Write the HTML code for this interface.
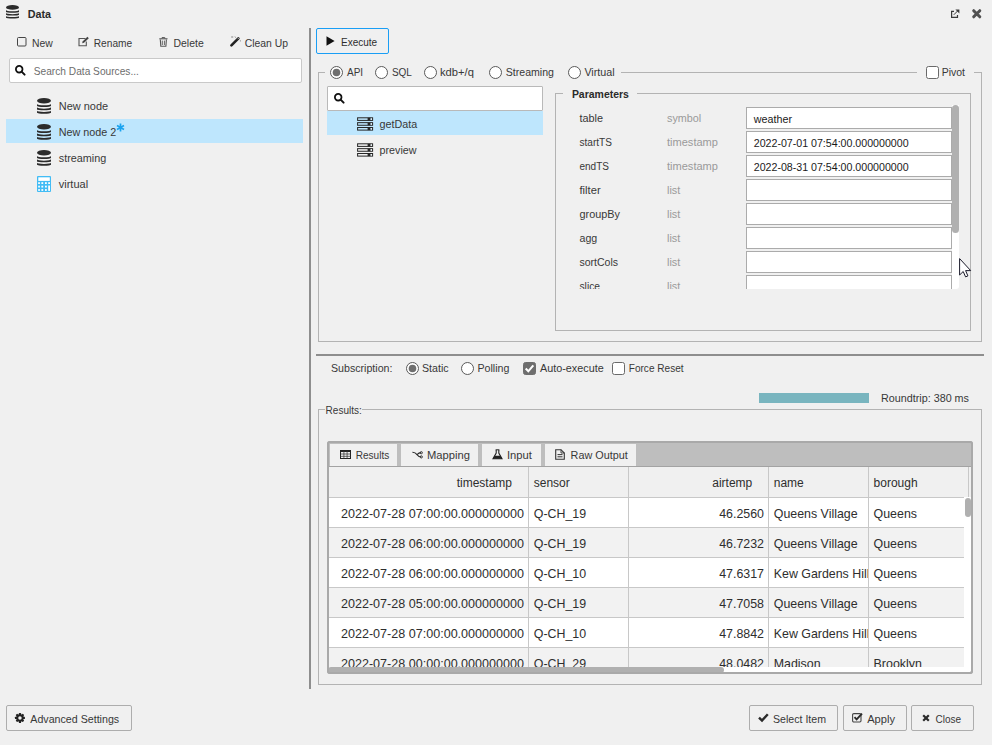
<!DOCTYPE html>
<html><head><meta charset="utf-8"><title>Data</title>
<style>
html,body{margin:0;padding:0;}
body{width:992px;height:745px;position:relative;overflow:hidden;background:#f0f0f0;font-family:"Liberation Sans",sans-serif;}
.t{position:absolute;white-space:nowrap;}
.r{position:absolute;box-sizing:border-box;}
svg{position:absolute;overflow:visible;}
</style></head><body>
<svg style="left:6px;top:5.1px" width="13" height="13.6" viewBox="0 0 14 16" preserveAspectRatio="none"><ellipse cx="7" cy="2.8" rx="7" ry="2.8" fill="#2b2b2b"/><path d="M0 6.0 V8.2 A7 0.9 0 0 0 14 8.2 V6.0 A7 1.4 0 0 1 0 6.0Z" fill="#2b2b2b"/><path d="M0 9.4 V11.6 A7 0.9 0 0 0 14 11.6 V9.4 A7 1.4 0 0 1 0 9.4Z" fill="#2b2b2b"/><path d="M0 12.8 V15.0 A7 0.9 0 0 0 14 15.0 V12.8 A7 1.4 0 0 1 0 12.8Z" fill="#2b2b2b"/></svg>
<div class="t" style="top:9.01px;font-size:10.76px;line-height:10.76px;color:#2a2a2a;font-weight:bold;left:27.80px;">Data</div>
<svg style="left:951px;top:8.5px" width="9" height="9" viewBox="0 0 9 9"><path d="M3 2.4 H0.6 V8.3 H6.5 V5.9" fill="none" stroke="#3a3a3a" stroke-width="1.2"/><path d="M2.8 5.8 L6.9 1.7" stroke="#3a3a3a" stroke-width="1"/><path d="M4.4 0.5 L8.4 0.5 L8.4 4.5Z" fill="#3a3a3a"/></svg>
<svg style="left:972px;top:9px" width="10" height="10" viewBox="0 0 10 10"><path d="M1.7 1.7 L7.8 7.8 M7.8 1.7 L1.7 7.8" stroke="#505050" stroke-width="3" stroke-linecap="round"/></svg>
<svg style="left:17px;top:37px" width="10" height="10" viewBox="0 0 10 10"><rect x="0.5" y="0.5" width="8.5" height="8.5" rx="1" fill="none" stroke="#444" stroke-width="1"/></svg>
<div class="t" style="top:39.01px;font-size:10.38px;line-height:10.38px;color:#383838;left:32.00px;">New</div>
<svg style="left:78px;top:36px" width="12" height="11" viewBox="0 0 12 11"><path d="M7.5 2.5 H1 V9.8 H8.3 V5.5" fill="none" stroke="#555" stroke-width="1.1"/><path d="M4.2 7.2 L4.6 5.4 L9.4 0.8 L10.8 2.2 L6 6.8Z" fill="#444"/></svg>
<div class="t" style="top:39.00px;font-size:10.19px;line-height:10.19px;color:#383838;left:93.75px;">Rename</div>
<svg style="left:159px;top:37px" width="9" height="10" viewBox="0 0 9 10"><path d="M0.3 1.8 H8.5" stroke="#555" stroke-width="1.1"/><path d="M3 1.5 V0.6 H5.8 V1.5" fill="none" stroke="#555" stroke-width="1"/><path d="M1.3 2.5 L1.8 9.3 H6.9 L7.4 2.5" fill="none" stroke="#555" stroke-width="1.1"/><path d="M3.3 3.6 V8 M5.4 3.6 V8" stroke="#555" stroke-width="0.9"/></svg>
<div class="t" style="top:39.00px;font-size:10.46px;line-height:10.46px;color:#383838;left:173.50px;">Delete</div>
<svg style="left:230px;top:36px" width="11" height="11" viewBox="0 0 11 11"><path d="M1.4 9.4 L8.4 2.4" stroke="#222" stroke-width="2.6" stroke-linecap="round"/><path d="M7.6 3.2 L9.2 1.6" stroke="#f0f0f0" stroke-width="0.7"/><path d="M1.2 1 H3.2 M5 0.6 L5.6 1.6 M10.4 4.4 V5.4" stroke="#666" stroke-width="0.8"/></svg>
<div class="t" style="top:39.01px;font-size:10.40px;line-height:10.40px;color:#383838;left:244.75px;">Clean Up</div>
<div class="r" style="left:9px;top:58px;width:293px;height:25px;background:#fff;border:1px solid #c9c9c9;border-radius:2px;"></div>
<svg style="left:15px;top:65px" width="11" height="11" viewBox="0 0 11 11"><circle cx="4.2" cy="4.2" r="3.3" fill="none" stroke="#111" stroke-width="1.8"/><path d="M6.6 6.6 L9.6 9.6" stroke="#111" stroke-width="2" stroke-linecap="round"/></svg>
<div class="t" style="top:67.01px;font-size:10.18px;line-height:10.18px;color:#6d6d6d;left:33.75px;">Search Data Sources...</div>
<div class="r" style="left:6px;top:119px;width:297px;height:24px;background:#bee6fd;"></div>
<svg style="left:37px;top:98.1px" width="14" height="15.8" viewBox="0 0 14 16" preserveAspectRatio="none"><ellipse cx="7" cy="2.8" rx="7" ry="2.8" fill="#2b2b2b"/><path d="M0 6.0 V8.2 A7 0.9 0 0 0 14 8.2 V6.0 A7 1.4 0 0 1 0 6.0Z" fill="#2b2b2b"/><path d="M0 9.4 V11.6 A7 0.9 0 0 0 14 11.6 V9.4 A7 1.4 0 0 1 0 9.4Z" fill="#2b2b2b"/><path d="M0 12.8 V15.0 A7 0.9 0 0 0 14 15.0 V12.8 A7 1.4 0 0 1 0 12.8Z" fill="#2b2b2b"/></svg>
<div class="t" style="top:101.00px;font-size:10.96px;line-height:10.96px;color:#383838;left:58.75px;">New node</div>
<svg style="left:37px;top:124.1px" width="14" height="15.8" viewBox="0 0 14 16" preserveAspectRatio="none"><ellipse cx="7" cy="2.8" rx="7" ry="2.8" fill="#2b2b2b"/><path d="M0 6.0 V8.2 A7 0.9 0 0 0 14 8.2 V6.0 A7 1.4 0 0 1 0 6.0Z" fill="#2b2b2b"/><path d="M0 9.4 V11.6 A7 0.9 0 0 0 14 11.6 V9.4 A7 1.4 0 0 1 0 9.4Z" fill="#2b2b2b"/><path d="M0 12.8 V15.0 A7 0.9 0 0 0 14 15.0 V12.8 A7 1.4 0 0 1 0 12.8Z" fill="#2b2b2b"/></svg>
<div class="t" style="top:127.00px;font-size:10.77px;line-height:10.77px;color:#383838;left:58.75px;">New node 2</div>
<svg style="left:37px;top:150.1px" width="14" height="15.8" viewBox="0 0 14 16" preserveAspectRatio="none"><ellipse cx="7" cy="2.8" rx="7" ry="2.8" fill="#2b2b2b"/><path d="M0 6.0 V8.2 A7 0.9 0 0 0 14 8.2 V6.0 A7 1.4 0 0 1 0 6.0Z" fill="#2b2b2b"/><path d="M0 9.4 V11.6 A7 0.9 0 0 0 14 11.6 V9.4 A7 1.4 0 0 1 0 9.4Z" fill="#2b2b2b"/><path d="M0 12.8 V15.0 A7 0.9 0 0 0 14 15.0 V12.8 A7 1.4 0 0 1 0 12.8Z" fill="#2b2b2b"/></svg>
<div class="t" style="top:153.01px;font-size:10.82px;line-height:10.82px;color:#383838;left:58.75px;">streaming</div>
<svg style="left:37px;top:176px" width="14" height="16" viewBox="0 0 14 16"><rect x="0" y="0" width="14" height="16" rx="1" fill="#42bcf5"/><rect x="1.3" y="1.3" width="11.5" height="3.6" fill="#fff"/><rect x="1.2" y="6.2" width="1.7" height="1.8" fill="#fff"/><rect x="4.4" y="6.2" width="1.8" height="1.8" fill="#fff"/><rect x="8.0" y="6.2" width="1.8" height="1.8" fill="#fff"/><rect x="11.2" y="6.2" width="1.8" height="1.8" fill="#fff"/><rect x="1.2" y="9.7" width="1.7" height="1.8" fill="#fff"/><rect x="4.4" y="9.7" width="1.8" height="1.8" fill="#fff"/><rect x="8.0" y="9.7" width="1.8" height="1.8" fill="#fff"/><rect x="1.2" y="13.1" width="1.7" height="1.8" fill="#fff"/><rect x="4.4" y="13.1" width="1.8" height="1.8" fill="#fff"/><rect x="8.0" y="13.1" width="1.8" height="1.8" fill="#fff"/><rect x="11.2" y="9.5" width="1.8" height="5.4" fill="#fff"/></svg>
<div class="t" style="top:179.00px;font-size:11.00px;line-height:11.00px;color:#383838;left:58.75px;">virtual</div>
<svg style="left:116.2px;top:123px" width="9" height="9" viewBox="0 0 9 9"><path d="M4.5 0.5 V8.5 M1 2.5 L8 6.5 M8 2.5 L1 6.5" stroke="#1aa3f0" stroke-width="1.7"/></svg>
<div class="r" style="left:309px;top:28px;width:2px;height:661px;background:#8e8e8e;"></div>
<div class="r" style="left:316px;top:28px;width:73px;height:26px;border:1px solid #1a9ef5;background:#f0f0f0;border-radius:2px;"></div>
<svg style="left:326px;top:36px" width="9" height="10" viewBox="0 0 9 10"><path d="M0.5 0.3 L8.6 5 L0.5 9.7Z" fill="#111"/></svg>
<div class="t" style="top:38.00px;font-size:10.00px;line-height:10.00px;color:#2e2e2e;left:341.00px;">Execute</div>
<div class="r" style="left:318px;top:72px;width:1px;height:270px;background:#b3b3b3;"></div>
<div class="r" style="left:318px;top:341px;width:664px;height:1px;background:#b3b3b3;"></div>
<div class="r" style="left:981px;top:72px;width:1px;height:270px;background:#b3b3b3;"></div>
<div class="r" style="left:318px;top:72px;width:7px;height:1px;background:#b3b3b3;"></div>
<div class="r" style="left:621px;top:72px;width:296px;height:1px;background:#b3b3b3;"></div>
<div class="r" style="left:974px;top:72px;width:8px;height:1px;background:#b3b3b3;"></div>
<svg style="left:330px;top:66px" width="13" height="13" viewBox="0 0 13 13"><circle cx="6.5" cy="6.5" r="6" fill="#fff" stroke="#5a5a5a" stroke-width="1"/><circle cx="6.5" cy="6.5" r="3.8" fill="#6e6e6e"/></svg>
<div class="t" style="top:68.00px;font-size:10.00px;line-height:10.00px;color:#383838;left:347.00px;">API</div>
<svg style="left:375px;top:66px" width="13" height="13" viewBox="0 0 13 13"><circle cx="6.5" cy="6.5" r="6" fill="#fff" stroke="#5a5a5a" stroke-width="1"/></svg>
<div class="t" style="top:68.00px;font-size:10.00px;line-height:10.00px;color:#383838;left:391.90px;">SQL</div>
<svg style="left:424px;top:66px" width="13" height="13" viewBox="0 0 13 13"><circle cx="6.5" cy="6.5" r="6" fill="#fff" stroke="#5a5a5a" stroke-width="1"/></svg>
<div class="t" style="top:67.00px;font-size:11.20px;line-height:11.20px;color:#383838;left:440.00px;">kdb+/q</div>
<svg style="left:489px;top:66px" width="13" height="13" viewBox="0 0 13 13"><circle cx="6.5" cy="6.5" r="6" fill="#fff" stroke="#5a5a5a" stroke-width="1"/></svg>
<div class="t" style="top:67.00px;font-size:10.57px;line-height:10.57px;color:#383838;left:505.80px;">Streaming</div>
<svg style="left:568px;top:66px" width="13" height="13" viewBox="0 0 13 13"><circle cx="6.5" cy="6.5" r="6" fill="#fff" stroke="#5a5a5a" stroke-width="1"/></svg>
<div class="t" style="top:67.00px;font-size:10.76px;line-height:10.76px;color:#383838;left:584.40px;">Virtual</div>
<svg style="left:926px;top:66px" width="13" height="13" viewBox="0 0 13 13"><rect x="0.5" y="0.5" width="12" height="12" rx="2" fill="#fff" stroke="#6a6a6a"/></svg>
<div class="t" style="top:68.00px;font-size:10.48px;line-height:10.48px;color:#383838;left:941.70px;">Pivot</div>
<div class="r" style="left:327px;top:86px;width:216px;height:25px;background:#fff;border:1px solid #b9b9b9;border-radius:1px;"></div>
<svg style="left:334px;top:93px" width="11" height="11" viewBox="0 0 11 11"><circle cx="4.2" cy="4.2" r="3.3" fill="none" stroke="#111" stroke-width="1.8"/><path d="M6.6 6.6 L9.6 9.6" stroke="#111" stroke-width="2" stroke-linecap="round"/></svg>
<div class="r" style="left:327px;top:111px;width:216px;height:24px;background:#bee6fd;"></div>
<svg style="left:357px;top:117px" width="17" height="14" viewBox="0 0 17 14"><rect x="0.6" y="0.80" width="15" height="2.6" fill="none" stroke="#262626" stroke-width="1"/><rect x="10.6" y="0.80" width="3" height="2.6" fill="#262626"/><rect x="13.6" y="1.50" width="1.4" height="1.3" fill="#e8f4fa"/><rect x="0.6" y="5.65" width="15" height="2.6" fill="none" stroke="#262626" stroke-width="1"/><rect x="10.6" y="5.65" width="3" height="2.6" fill="#262626"/><rect x="13.6" y="6.35" width="1.4" height="1.3" fill="#e8f4fa"/><rect x="0.6" y="10.50" width="15" height="2.6" fill="none" stroke="#262626" stroke-width="1"/><rect x="10.6" y="10.50" width="3" height="2.6" fill="#262626"/><rect x="13.6" y="11.20" width="1.4" height="1.3" fill="#e8f4fa"/></svg>
<svg style="left:357px;top:143px" width="17" height="14" viewBox="0 0 17 14"><rect x="0.6" y="0.80" width="15" height="2.6" fill="none" stroke="#262626" stroke-width="1"/><rect x="10.6" y="0.80" width="3" height="2.6" fill="#262626"/><rect x="13.6" y="1.50" width="1.4" height="1.3" fill="#e8f4fa"/><rect x="0.6" y="5.65" width="15" height="2.6" fill="none" stroke="#262626" stroke-width="1"/><rect x="10.6" y="5.65" width="3" height="2.6" fill="#262626"/><rect x="13.6" y="6.35" width="1.4" height="1.3" fill="#e8f4fa"/><rect x="0.6" y="10.50" width="15" height="2.6" fill="none" stroke="#262626" stroke-width="1"/><rect x="10.6" y="10.50" width="3" height="2.6" fill="#262626"/><rect x="13.6" y="11.20" width="1.4" height="1.3" fill="#e8f4fa"/></svg>
<div class="t" style="top:119.00px;font-size:10.78px;line-height:10.78px;color:#383838;left:379.50px;">getData</div>
<div class="t" style="top:145.00px;font-size:10.76px;line-height:10.76px;color:#383838;left:379.50px;">preview</div>
<div class="r" style="left:952px;top:105px;width:7px;height:184px;background:#fff;border-radius:0 0 3px 0;"></div>
<div class="t" style="top:113.00px;font-size:10.89px;line-height:10.89px;color:#383838;left:579.50px;">table</div>
<div class="t" style="top:113.00px;font-size:10.81px;line-height:10.81px;color:#9a9a9a;left:667.00px;">symbol</div>
<div class="r" style="left:746px;top:107px;width:206px;height:22px;background:#fff;border:1px solid #ababab;"></div>
<div class="t" style="top:114.01px;font-size:10.74px;line-height:10.74px;color:#1a1a1a;left:753.77px;">weather</div>
<div class="t" style="top:138.01px;font-size:10.05px;line-height:10.05px;color:#383838;left:579.50px;">startTS</div>
<div class="t" style="top:137.01px;font-size:11.06px;line-height:11.06px;color:#9a9a9a;left:667.00px;">timestamp</div>
<div class="r" style="left:746px;top:131px;width:206px;height:22px;background:#fff;border:1px solid #ababab;"></div>
<div class="t" style="top:138.00px;font-size:10.63px;line-height:10.63px;color:#1a1a1a;left:753.75px;">2022-07-01 07:54:00.000000000</div>
<div class="t" style="top:162.01px;font-size:10.01px;line-height:10.01px;color:#383838;left:579.50px;">endTS</div>
<div class="t" style="top:161.01px;font-size:11.06px;line-height:11.06px;color:#9a9a9a;left:667.00px;">timestamp</div>
<div class="r" style="left:746px;top:155px;width:206px;height:22px;background:#fff;border:1px solid #ababab;"></div>
<div class="t" style="top:162.00px;font-size:10.63px;line-height:10.63px;color:#1a1a1a;left:753.75px;">2022-08-31 07:54:00.000000000</div>
<div class="t" style="top:185.00px;font-size:11.20px;line-height:11.20px;color:#383838;left:579.50px;">filter</div>
<div class="t" style="top:185.01px;font-size:10.84px;line-height:10.84px;color:#9a9a9a;left:667.00px;">list</div>
<div class="r" style="left:746px;top:179px;width:206px;height:22px;background:#fff;border:1px solid #ababab;"></div>
<div class="t" style="top:209.00px;font-size:10.87px;line-height:10.87px;color:#383838;left:579.50px;">groupBy</div>
<div class="t" style="top:209.01px;font-size:10.84px;line-height:10.84px;color:#9a9a9a;left:667.00px;">list</div>
<div class="r" style="left:746px;top:203px;width:206px;height:22px;background:#fff;border:1px solid #ababab;"></div>
<div class="t" style="top:233.01px;font-size:10.64px;line-height:10.64px;color:#383838;left:579.50px;">agg</div>
<div class="t" style="top:233.01px;font-size:10.84px;line-height:10.84px;color:#9a9a9a;left:667.00px;">list</div>
<div class="r" style="left:746px;top:227px;width:206px;height:22px;background:#fff;border:1px solid #ababab;"></div>
<div class="t" style="top:257.01px;font-size:10.52px;line-height:10.52px;color:#383838;left:579.50px;">sortCols</div>
<div class="t" style="top:257.01px;font-size:10.84px;line-height:10.84px;color:#9a9a9a;left:667.00px;">list</div>
<div class="r" style="left:746px;top:251px;width:206px;height:22px;background:#fff;border:1px solid #ababab;"></div>
<div class="t" style="top:282.00px;font-size:10.24px;line-height:10.24px;color:#383838;left:579.50px;">slice</div>
<div class="t" style="top:281.01px;font-size:10.84px;line-height:10.84px;color:#9a9a9a;left:667.00px;">list</div>
<div class="r" style="left:746px;top:275px;width:206px;height:22px;background:#fff;border:1px solid #ababab;"></div>
<div class="r" style="left:952px;top:105px;width:7px;height:128px;background:#b0b0b0;border-radius:3.5px;"></div>
<div class="r" style="left:556px;top:289px;width:414px;height:41px;background:#f0f0f0;"></div>
<div class="r" style="left:555px;top:93px;width:1px;height:238px;background:#b3b3b3;"></div>
<div class="r" style="left:555px;top:330px;width:416px;height:1px;background:#b3b3b3;"></div>
<div class="r" style="left:970px;top:93px;width:1px;height:238px;background:#b3b3b3;"></div>
<div class="r" style="left:555px;top:93px;width:8px;height:1px;background:#b3b3b3;"></div>
<div class="r" style="left:637px;top:93px;width:334px;height:1px;background:#b3b3b3;"></div>
<div class="t" style="top:90.00px;font-size:10.48px;line-height:10.48px;color:#2a2a2a;font-weight:bold;left:571.90px;">Parameters</div>
<svg style="left:959px;top:257.8px" width="13" height="21" viewBox="0 0 13 21"><path d="M0.6 0.6 V17 L4.2 13.5 L6.6 18.9 L8.9 17.9 L6.6 12.6 H11.7Z" fill="#fff" stroke="#1a1a2a" stroke-width="1.0" stroke-linejoin="round"/></svg>
<div class="r" style="left:316px;top:354px;width:668px;height:2px;background:#8e8e8e;"></div>
<div class="t" style="top:363.01px;font-size:10.64px;line-height:10.64px;color:#383838;left:331.00px;">Subscription:</div>
<svg style="left:406px;top:362px" width="13" height="13" viewBox="0 0 13 13"><circle cx="6.5" cy="6.5" r="6" fill="#fff" stroke="#5a5a5a" stroke-width="1"/><circle cx="6.5" cy="6.5" r="3.8" fill="#6e6e6e"/></svg>
<div class="t" style="top:363.00px;font-size:10.64px;line-height:10.64px;color:#383838;left:422.00px;">Static</div>
<svg style="left:461px;top:362px" width="13" height="13" viewBox="0 0 13 13"><circle cx="6.5" cy="6.5" r="6" fill="#fff" stroke="#5a5a5a" stroke-width="1"/></svg>
<div class="t" style="top:363.00px;font-size:10.63px;line-height:10.63px;color:#383838;left:477.50px;">Polling</div>
<svg style="left:523px;top:362px" width="13" height="13" viewBox="0 0 13 13"><rect x="0.5" y="0.5" width="12" height="12" rx="2" fill="#6e6e6e" stroke="#6e6e6e"/><path d="M2.7 6.6 L5.3 9.3 L10.3 3.3" fill="none" stroke="#fff" stroke-width="2.1"/></svg>
<div class="t" style="top:363.01px;font-size:10.82px;line-height:10.82px;color:#383838;left:540.00px;">Auto-execute</div>
<svg style="left:612px;top:362px" width="13" height="13" viewBox="0 0 13 13"><rect x="0.5" y="0.5" width="12" height="12" rx="2" fill="#fff" stroke="#6a6a6a"/></svg>
<div class="t" style="top:364.01px;font-size:10.07px;line-height:10.07px;color:#383838;left:628.75px;">Force Reset</div>
<div class="r" style="left:759px;top:393px;width:110px;height:10px;background:#79b5bf;"></div>
<div class="t" style="top:393.01px;font-size:10.77px;line-height:10.77px;color:#383838;left:881.00px;">Roundtrip: 380 ms</div>
<div class="r" style="left:318px;top:409px;width:1px;height:276px;background:#b3b3b3;"></div>
<div class="r" style="left:318px;top:684px;width:664px;height:1px;background:#b3b3b3;"></div>
<div class="r" style="left:981px;top:409px;width:1px;height:276px;background:#b3b3b3;"></div>
<div class="r" style="left:318px;top:409px;width:7px;height:1px;background:#b3b3b3;"></div>
<div class="r" style="left:362px;top:409px;width:620px;height:1px;background:#b3b3b3;"></div>
<div class="t" style="top:406.00px;font-size:10.00px;line-height:10.00px;color:#383838;left:325.60px;">Results:</div>
<div class="r" style="left:327px;top:441px;width:646px;height:233px;background:#fff;border:2px solid #a9a9a9;border-radius:3px;"></div>
<div class="r" style="left:329px;top:443px;width:642px;height:23px;background:#bebebe;"></div>
<div class="r" style="left:329px;top:466px;width:642px;height:1px;background:#a3a3a3;"></div>
<div class="r" style="left:330px;top:444px;width:67px;height:22px;background:#f0f0f0;"></div>
<div class="r" style="left:401px;top:444px;width:77px;height:22px;background:#f0f0f0;"></div>
<div class="r" style="left:482px;top:444px;width:59px;height:22px;background:#f0f0f0;"></div>
<div class="r" style="left:545px;top:444px;width:91px;height:22px;background:#f0f0f0;"></div>
<svg style="left:340px;top:450px" width="11" height="9" viewBox="0 0 11 9"><rect x="0.5" y="0.5" width="10" height="8" fill="none" stroke="#222" stroke-width="1"/><rect x="0" y="0" width="11" height="2" fill="#222"/><path d="M0.5 4 H10.5 M0.5 6.3 H10.5 M3.9 1 V8.5 M7.1 1 V8.5" stroke="#3a3a3a" stroke-width="0.75"/></svg>
<div class="t" style="top:451.01px;font-size:10.05px;line-height:10.05px;color:#383838;left:355.75px;">Results</div>
<svg style="left:412px;top:451px" width="11" height="8" viewBox="0 0 11 8"><path d="M0.4 1.3 Q3.2 1.2 5 3.6 Q6.8 6 9.2 6" fill="none" stroke="#2a2a2a" stroke-width="1.1"/><path d="M5 3.6 Q6.8 1.6 9.2 1.6" fill="none" stroke="#2a2a2a" stroke-width="1.1"/><circle cx="9.3" cy="1.7" r="1.1" fill="none" stroke="#2a2a2a" stroke-width="0.9"/><circle cx="9.3" cy="5.9" r="1.1" fill="none" stroke="#2a2a2a" stroke-width="0.9"/></svg>
<div class="t" style="top:450.00px;font-size:11.20px;line-height:11.20px;color:#383838;left:427.00px;">Mapping</div>
<svg style="left:492px;top:449px" width="11" height="11" viewBox="0 0 11 11"><path d="M3.6 0.8 H7.4" stroke="#222" stroke-width="1"/><path d="M4.2 1 V4 L1 9.8 H10 L6.8 4 V1" fill="none" stroke="#222" stroke-width="1.1"/><path d="M2.5 6.8 H8.5 L10 9.8 H1Z" fill="#222"/></svg>
<div class="t" style="top:450.00px;font-size:11.20px;line-height:11.20px;color:#383838;left:507.00px;">Input</div>
<svg style="left:555px;top:449px" width="10" height="11" viewBox="0 0 10 11"><path d="M0.7 0.7 H6 L9.3 4 V10.3 H0.7Z" fill="none" stroke="#333" stroke-width="1.1"/><path d="M6 0.7 V4 H9.3" fill="none" stroke="#333" stroke-width="0.9"/><path d="M2.5 5.6 H7.5 M2.5 7.8 H7.5" stroke="#333" stroke-width="1"/></svg>
<div class="t" style="top:450.01px;font-size:10.82px;line-height:10.82px;color:#383838;left:570.60px;">Raw Output</div>
<div class="r" style="left:329px;top:467px;width:635px;height:30px;background:#f0f0f0;"></div>
<div class="r" style="left:964px;top:467px;width:7px;height:30px;background:#f0f0f0;"></div>
<div class="r" style="left:329px;top:497px;width:635px;height:1px;background:#c8c8c8;"></div>
<div class="r" style="left:528px;top:467px;width:1px;height:30px;background:#c8c8c8;"></div>
<div class="r" style="left:628px;top:467px;width:1px;height:30px;background:#c8c8c8;"></div>
<div class="r" style="left:768px;top:467px;width:1px;height:30px;background:#c8c8c8;"></div>
<div class="r" style="left:868px;top:467px;width:1px;height:30px;background:#c8c8c8;"></div>
<div class="r" style="left:968px;top:467px;width:1px;height:30px;background:#c8c8c8;"></div>
<div class="t" style="top:477.01px;font-size:12.00px;line-height:12.00px;color:#2e2e2e;right:480.00px;">timestamp</div>
<div class="t" style="top:477.01px;font-size:12.00px;line-height:12.00px;color:#2e2e2e;left:533.75px;">sensor</div>
<div class="t" style="top:477.01px;font-size:12.00px;line-height:12.00px;color:#2e2e2e;right:239.76px;">airtemp</div>
<div class="t" style="top:477.01px;font-size:12.00px;line-height:12.00px;color:#2e2e2e;left:773.75px;">name</div>
<div class="t" style="top:477.01px;font-size:12.00px;line-height:12.00px;color:#2e2e2e;left:873.60px;">borough</div>
<div style="position:absolute;left:0;top:0;width:992px;height:667px;overflow:hidden;">
<div class="r" style="left:329px;top:498px;width:635px;height:29px;background:#ffffff;"></div>
<div class="r" style="left:329px;top:527px;width:635px;height:1px;background:#c8c8c8;"></div>
<div class="r" style="left:528px;top:498px;width:1px;height:30px;background:#c8c8c8;"></div>
<div class="r" style="left:628px;top:498px;width:1px;height:30px;background:#c8c8c8;"></div>
<div class="r" style="left:768px;top:498px;width:1px;height:30px;background:#c8c8c8;"></div>
<div class="r" style="left:868px;top:498px;width:1px;height:30px;background:#c8c8c8;"></div>
<div class="t" style="top:508.00px;font-size:12.57px;line-height:12.57px;color:#2e2e2e;right:468.00px;">2022-07-28 07:00:00.000000000</div>
<div class="t" style="top:508.00px;font-size:12.40px;line-height:12.40px;color:#2e2e2e;left:533.75px;">Q-CH_19</div>
<div class="t" style="top:508.00px;font-size:12.40px;line-height:12.40px;color:#2e2e2e;right:228.00px;">46.2560</div>
<div style="position:absolute;left:769px;top:498px;width:99px;height:30px;overflow:hidden;">
<div class="t" style="top:10.00px;font-size:12.40px;line-height:12.40px;color:#2e2e2e;left:4.75px;">Queens Village</div>
</div>
<div class="t" style="top:508.00px;font-size:12.40px;line-height:12.40px;color:#2e2e2e;left:873.60px;">Queens</div>
<div class="r" style="left:329px;top:528px;width:635px;height:29px;background:#f2f2f2;"></div>
<div class="r" style="left:329px;top:557px;width:635px;height:1px;background:#c8c8c8;"></div>
<div class="r" style="left:528px;top:528px;width:1px;height:30px;background:#c8c8c8;"></div>
<div class="r" style="left:628px;top:528px;width:1px;height:30px;background:#c8c8c8;"></div>
<div class="r" style="left:768px;top:528px;width:1px;height:30px;background:#c8c8c8;"></div>
<div class="r" style="left:868px;top:528px;width:1px;height:30px;background:#c8c8c8;"></div>
<div class="t" style="top:538.00px;font-size:12.57px;line-height:12.57px;color:#2e2e2e;right:468.00px;">2022-07-28 06:00:00.000000000</div>
<div class="t" style="top:538.00px;font-size:12.40px;line-height:12.40px;color:#2e2e2e;left:533.75px;">Q-CH_19</div>
<div class="t" style="top:538.00px;font-size:12.40px;line-height:12.40px;color:#2e2e2e;right:228.00px;">46.7232</div>
<div style="position:absolute;left:769px;top:528px;width:99px;height:30px;overflow:hidden;">
<div class="t" style="top:10.00px;font-size:12.40px;line-height:12.40px;color:#2e2e2e;left:4.75px;">Queens Village</div>
</div>
<div class="t" style="top:538.00px;font-size:12.40px;line-height:12.40px;color:#2e2e2e;left:873.60px;">Queens</div>
<div class="r" style="left:329px;top:558px;width:635px;height:29px;background:#ffffff;"></div>
<div class="r" style="left:329px;top:587px;width:635px;height:1px;background:#c8c8c8;"></div>
<div class="r" style="left:528px;top:558px;width:1px;height:30px;background:#c8c8c8;"></div>
<div class="r" style="left:628px;top:558px;width:1px;height:30px;background:#c8c8c8;"></div>
<div class="r" style="left:768px;top:558px;width:1px;height:30px;background:#c8c8c8;"></div>
<div class="r" style="left:868px;top:558px;width:1px;height:30px;background:#c8c8c8;"></div>
<div class="t" style="top:568.00px;font-size:12.57px;line-height:12.57px;color:#2e2e2e;right:468.00px;">2022-07-28 06:00:00.000000000</div>
<div class="t" style="top:568.00px;font-size:12.40px;line-height:12.40px;color:#2e2e2e;left:533.75px;">Q-CH_10</div>
<div class="t" style="top:568.00px;font-size:12.40px;line-height:12.40px;color:#2e2e2e;right:228.00px;">47.6317</div>
<div style="position:absolute;left:769px;top:558px;width:99px;height:30px;overflow:hidden;">
<div class="t" style="top:10.00px;font-size:12.40px;line-height:12.40px;color:#2e2e2e;left:4.75px;">Kew Gardens Hills</div>
</div>
<div class="t" style="top:568.00px;font-size:12.40px;line-height:12.40px;color:#2e2e2e;left:873.60px;">Queens</div>
<div class="r" style="left:329px;top:588px;width:635px;height:29px;background:#f2f2f2;"></div>
<div class="r" style="left:329px;top:617px;width:635px;height:1px;background:#c8c8c8;"></div>
<div class="r" style="left:528px;top:588px;width:1px;height:30px;background:#c8c8c8;"></div>
<div class="r" style="left:628px;top:588px;width:1px;height:30px;background:#c8c8c8;"></div>
<div class="r" style="left:768px;top:588px;width:1px;height:30px;background:#c8c8c8;"></div>
<div class="r" style="left:868px;top:588px;width:1px;height:30px;background:#c8c8c8;"></div>
<div class="t" style="top:598.00px;font-size:12.57px;line-height:12.57px;color:#2e2e2e;right:468.00px;">2022-07-28 05:00:00.000000000</div>
<div class="t" style="top:598.00px;font-size:12.40px;line-height:12.40px;color:#2e2e2e;left:533.75px;">Q-CH_19</div>
<div class="t" style="top:598.00px;font-size:12.40px;line-height:12.40px;color:#2e2e2e;right:228.00px;">47.7058</div>
<div style="position:absolute;left:769px;top:588px;width:99px;height:30px;overflow:hidden;">
<div class="t" style="top:10.00px;font-size:12.40px;line-height:12.40px;color:#2e2e2e;left:4.75px;">Queens Village</div>
</div>
<div class="t" style="top:598.00px;font-size:12.40px;line-height:12.40px;color:#2e2e2e;left:873.60px;">Queens</div>
<div class="r" style="left:329px;top:618px;width:635px;height:29px;background:#ffffff;"></div>
<div class="r" style="left:329px;top:647px;width:635px;height:1px;background:#c8c8c8;"></div>
<div class="r" style="left:528px;top:618px;width:1px;height:30px;background:#c8c8c8;"></div>
<div class="r" style="left:628px;top:618px;width:1px;height:30px;background:#c8c8c8;"></div>
<div class="r" style="left:768px;top:618px;width:1px;height:30px;background:#c8c8c8;"></div>
<div class="r" style="left:868px;top:618px;width:1px;height:30px;background:#c8c8c8;"></div>
<div class="t" style="top:628.00px;font-size:12.57px;line-height:12.57px;color:#2e2e2e;right:468.00px;">2022-07-28 07:00:00.000000000</div>
<div class="t" style="top:628.00px;font-size:12.40px;line-height:12.40px;color:#2e2e2e;left:533.75px;">Q-CH_10</div>
<div class="t" style="top:628.00px;font-size:12.40px;line-height:12.40px;color:#2e2e2e;right:228.00px;">47.8842</div>
<div style="position:absolute;left:769px;top:618px;width:99px;height:30px;overflow:hidden;">
<div class="t" style="top:10.00px;font-size:12.40px;line-height:12.40px;color:#2e2e2e;left:4.75px;">Kew Gardens Hills</div>
</div>
<div class="t" style="top:628.00px;font-size:12.40px;line-height:12.40px;color:#2e2e2e;left:873.60px;">Queens</div>
<div class="r" style="left:329px;top:648px;width:635px;height:29px;background:#f2f2f2;"></div>
<div class="r" style="left:329px;top:677px;width:635px;height:1px;background:#c8c8c8;"></div>
<div class="r" style="left:528px;top:648px;width:1px;height:30px;background:#c8c8c8;"></div>
<div class="r" style="left:628px;top:648px;width:1px;height:30px;background:#c8c8c8;"></div>
<div class="r" style="left:768px;top:648px;width:1px;height:30px;background:#c8c8c8;"></div>
<div class="r" style="left:868px;top:648px;width:1px;height:30px;background:#c8c8c8;"></div>
<div class="t" style="top:658.00px;font-size:12.57px;line-height:12.57px;color:#2e2e2e;right:468.00px;">2022-07-28 00:00:00.000000000</div>
<div class="t" style="top:658.00px;font-size:12.40px;line-height:12.40px;color:#2e2e2e;left:533.75px;">Q-CH_29</div>
<div class="t" style="top:658.00px;font-size:12.40px;line-height:12.40px;color:#2e2e2e;right:228.00px;">48.0482</div>
<div style="position:absolute;left:769px;top:648px;width:99px;height:30px;overflow:hidden;">
<div class="t" style="top:10.00px;font-size:12.40px;line-height:12.40px;color:#2e2e2e;left:4.75px;">Madison</div>
</div>
<div class="t" style="top:658.00px;font-size:12.40px;line-height:12.40px;color:#2e2e2e;left:873.60px;">Brooklyn</div>
</div>
<div class="r" style="left:329px;top:667px;width:635px;height:5px;background:#fff;"></div>
<div class="r" style="left:328px;top:667px;width:396px;height:6px;background:#b0b0b0;border-radius:3px;"></div>
<div class="r" style="left:964px;top:498px;width:7px;height:169px;background:#fff;"></div>
<div class="r" style="left:964.5px;top:498px;width:6px;height:18.5px;background:#b0b0b0;border-radius:3px;"></div>
<div class="r" style="left:327px;top:441px;width:646px;height:233px;border:2px solid #a9a9a9;border-radius:3px;"></div>
<div class="r" style="left:6px;top:705px;width:126px;height:26px;border:1px solid #adadad;background:#f0f0f0;border-radius:2px;"></div>
<svg style="left:15px;top:713px" width="10" height="10" viewBox="0 0 10 10"><circle cx="4.95" cy="4.9" r="3.7" fill="#222"/><rect x="3.85" y="-0.1" width="2.2" height="2.6" rx="0.5" fill="#222" transform="rotate(0 4.95 4.9)"/><rect x="3.85" y="-0.1" width="2.2" height="2.6" rx="0.5" fill="#222" transform="rotate(45 4.95 4.9)"/><rect x="3.85" y="-0.1" width="2.2" height="2.6" rx="0.5" fill="#222" transform="rotate(90 4.95 4.9)"/><rect x="3.85" y="-0.1" width="2.2" height="2.6" rx="0.5" fill="#222" transform="rotate(135 4.95 4.9)"/><rect x="3.85" y="-0.1" width="2.2" height="2.6" rx="0.5" fill="#222" transform="rotate(180 4.95 4.9)"/><rect x="3.85" y="-0.1" width="2.2" height="2.6" rx="0.5" fill="#222" transform="rotate(225 4.95 4.9)"/><rect x="3.85" y="-0.1" width="2.2" height="2.6" rx="0.5" fill="#222" transform="rotate(270 4.95 4.9)"/><rect x="3.85" y="-0.1" width="2.2" height="2.6" rx="0.5" fill="#222" transform="rotate(315 4.95 4.9)"/><circle cx="4.95" cy="4.9" r="1.75" fill="#f0f0f0"/></svg>
<div class="t" style="top:714.00px;font-size:10.67px;line-height:10.67px;color:#383838;left:30.30px;">Advanced Settings</div>
<div class="r" style="left:749px;top:705px;width:89px;height:26px;border:1px solid #adadad;background:#f0f0f0;border-radius:2px;"></div>
<svg style="left:758px;top:713px" width="11" height="9" viewBox="0 0 11 9"><path d="M1 4.6 L4 7.6 L9.8 1.2" fill="none" stroke="#2a2a2a" stroke-width="2.4"/></svg>
<div class="t" style="top:714.00px;font-size:10.60px;line-height:10.60px;color:#383838;left:773.00px;">Select Item</div>
<div class="r" style="left:843px;top:705px;width:64px;height:26px;border:1px solid #adadad;background:#f0f0f0;border-radius:2px;"></div>
<svg style="left:852px;top:712px" width="11" height="11" viewBox="0 0 11 11"><rect x="0.6" y="1.6" width="8.4" height="8.4" rx="1.2" fill="none" stroke="#444" stroke-width="1.1"/><path d="M2.5 5.2 L4.6 7.3 L10 1.6" fill="none" stroke="#2a2a2a" stroke-width="1.9"/></svg>
<div class="t" style="top:714.01px;font-size:11.12px;line-height:11.12px;color:#383838;left:867.20px;">Apply</div>
<div class="r" style="left:911px;top:705px;width:63px;height:26px;border:1px solid #adadad;background:#f0f0f0;border-radius:2px;"></div>
<svg style="left:922px;top:714px" width="8" height="8" viewBox="0 0 8 8"><path d="M1.2 1.2 L6.8 6.8 M6.8 1.2 L1.2 6.8" stroke="#2a2a2a" stroke-width="2.2"/></svg>
<div class="t" style="top:715.00px;font-size:10.00px;line-height:10.00px;color:#383838;left:935.50px;">Close</div>
</body></html>
